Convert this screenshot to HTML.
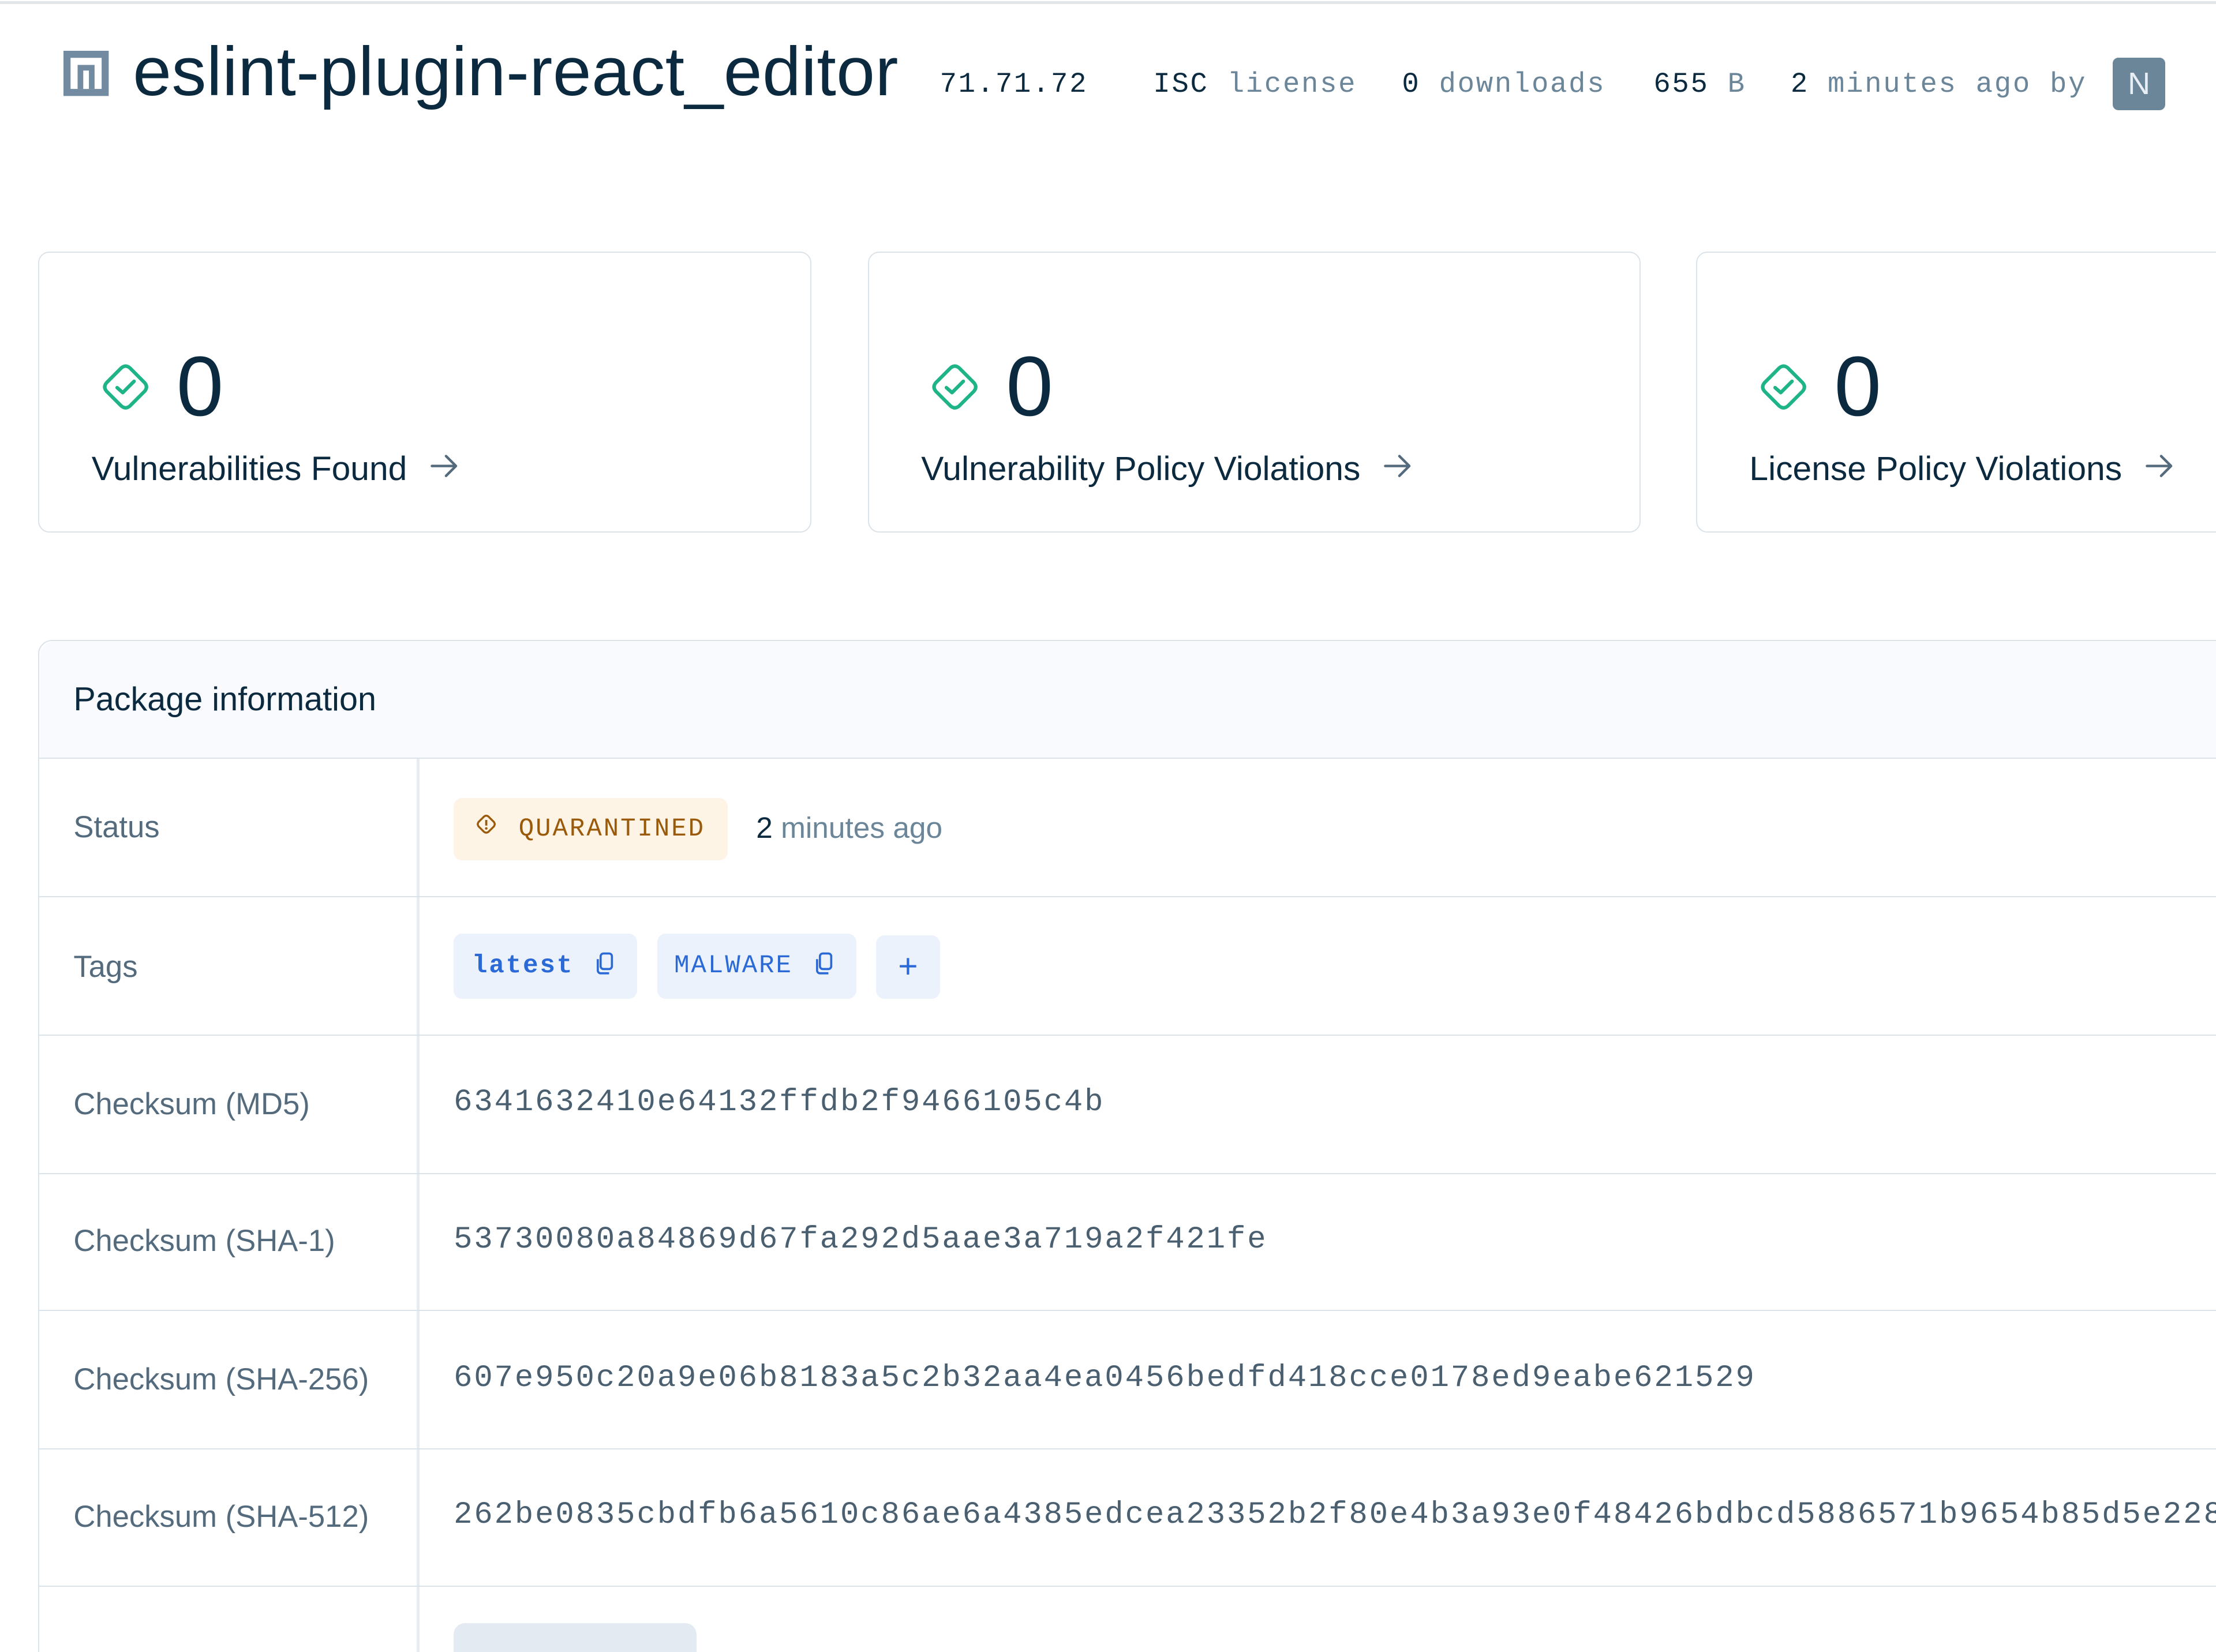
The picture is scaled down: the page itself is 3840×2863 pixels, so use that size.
<!DOCTYPE html>
<html><head><meta charset="utf-8"><style>
html,body{margin:0;padding:0;background:#fff;overflow:hidden}
#w{zoom:2.449;width:1568px;height:1169px;position:relative;overflow:hidden;font-family:"Liberation Sans",sans-serif;color:#0b2a3f}
.a{position:absolute;white-space:nowrap}
.mono{font-family:"Liberation Mono",monospace}
.card{position:absolute;top:178px;width:547px;height:199px;border:1px solid #dbe3ea;border-radius:8px;box-sizing:border-box}
.card .ic{position:absolute;left:44px;top:78px}
.card .n{position:absolute;left:97px;top:62px;font-size:60px;line-height:66px}
.card .l{position:absolute;left:37px;top:138px;font-size:24px;line-height:30px}
.card .ar{display:inline-block;margin-left:10px;vertical-align:2px}
.row{position:absolute;left:27px;width:1560px;border-top:1px solid #dbe3ea}
.lab{position:absolute;left:25px;font-size:21.5px;color:#546a7d}
.val{position:absolute;left:294px;font-size:22px;color:#4a5f70;letter-spacing:1.2px;font-family:"Liberation Mono",monospace}
</style></head><body><div id="w">
<div class="a" style="left:0;top:1px;width:1568px;height:2px;background:#e3e6e9"></div>
<svg class="a" style="left:45px;top:36px" width="32" height="32" viewBox="0 0 32 32"><rect width="32" height="32" fill="#728ba0"/><rect x="5" y="5" width="22" height="22" fill="#fff"/><rect x="10" y="10" width="12" height="17" fill="#728ba0"/><rect x="14" y="14" width="4" height="13" fill="#fff"/></svg>
<div class="a" style="left:94px;top:23px;font-size:49px;line-height:56px;font-weight:500;letter-spacing:0.2px">eslint-plugin-react_editor</div>
<div class="a mono" style="left:665px;top:47px;font-size:20px;line-height:26px;letter-spacing:1.1px;color:#0b2a3f">71.71.72</div>
<div class="a mono" style="left:816px;top:47px;font-size:20px;line-height:26px;letter-spacing:1.1px">ISC <span style="color:#6b8599">license</span></div>
<div class="a mono" style="left:992px;top:47px;font-size:20px;line-height:26px;letter-spacing:1.1px">0 <span style="color:#6b8599">downloads</span></div>
<div class="a mono" style="left:1170px;top:47px;font-size:20px;line-height:26px;letter-spacing:1.1px">655 <span style="color:#6b8599">B</span></div>
<div class="a mono" style="left:1267px;top:47px;font-size:20px;line-height:26px;letter-spacing:1.1px">2 <span style="color:#6b8599">minutes ago by</span></div>
<div class="a" style="left:1495px;top:41px;width:37px;height:37px;border-radius:4px;background:#6b8599;color:#e8eef3;font-size:22px;line-height:37px;text-align:center">N</div>

<div class="card" style="left:27px"><svg class="ic" width="34" height="34" viewBox="0 0 34 34"><path d="M14 3.5 Q17 1 20 3.5 L30.5 14 Q33 17 30.5 20 L20 30.5 Q17 33 14 30.5 L3.5 20 Q1 17 3.5 14 Z" fill="none" stroke="#1fb487" stroke-width="2.5" stroke-linejoin="round"/><path d="M11 17.5 L15 21 L23 13" fill="none" stroke="#1fb487" stroke-width="2.5" stroke-linecap="round" stroke-linejoin="round"/></svg><div class="n">0</div><div class="l">Vulnerabilities Found <svg class="ar" width="20" height="16" viewBox="0 0 20 16"><path d="M1 8h17M11 1l7 7-7 7" fill="none" stroke="#546a7d" stroke-width="1.8" stroke-linecap="round" stroke-linejoin="round"/></svg></div></div>
<div class="card" style="left:614px"><svg class="ic" width="34" height="34" viewBox="0 0 34 34"><path d="M14 3.5 Q17 1 20 3.5 L30.5 14 Q33 17 30.5 20 L20 30.5 Q17 33 14 30.5 L3.5 20 Q1 17 3.5 14 Z" fill="none" stroke="#1fb487" stroke-width="2.5" stroke-linejoin="round"/><path d="M11 17.5 L15 21 L23 13" fill="none" stroke="#1fb487" stroke-width="2.5" stroke-linecap="round" stroke-linejoin="round"/></svg><div class="n">0</div><div class="l">Vulnerability Policy Violations <svg class="ar" width="20" height="16" viewBox="0 0 20 16"><path d="M1 8h17M11 1l7 7-7 7" fill="none" stroke="#546a7d" stroke-width="1.8" stroke-linecap="round" stroke-linejoin="round"/></svg></div></div>
<div class="card" style="left:1200px"><svg class="ic" width="34" height="34" viewBox="0 0 34 34"><path d="M14 3.5 Q17 1 20 3.5 L30.5 14 Q33 17 30.5 20 L20 30.5 Q17 33 14 30.5 L3.5 20 Q1 17 3.5 14 Z" fill="none" stroke="#1fb487" stroke-width="2.5" stroke-linejoin="round"/><path d="M11 17.5 L15 21 L23 13" fill="none" stroke="#1fb487" stroke-width="2.5" stroke-linecap="round" stroke-linejoin="round"/></svg><div class="n">0</div><div class="l">License Policy Violations <svg class="ar" width="20" height="16" viewBox="0 0 20 16"><path d="M1 8h17M11 1l7 7-7 7" fill="none" stroke="#546a7d" stroke-width="1.8" stroke-linecap="round" stroke-linejoin="round"/></svg></div></div>

<div class="a" style="left:27px;top:453px;width:1560px;height:760px;border:1px solid #dbe3ea;border-radius:10px;box-sizing:border-box"></div>
<div class="a" style="left:28px;top:454px;width:1560px;height:83px;background:#f8fafd;border-radius:10px 0 0 0"></div>
<div class="a" style="left:52px;top:480px;font-size:23.5px;line-height:30px;font-weight:500">Package information</div>
<div class="a" style="left:295px;top:537px;width:2px;height:640px;background:#e6ecf2"></div>

<div class="row" style="top:536px;height:98px"><div class="lab" style="top:36px">Status</div>
<div class="a" style="left:294px;top:28px;width:194px;height:44px;background:#fdf4e6;border-radius:6px"></div>
<svg class="a" style="left:309px;top:39px" width="16" height="18" viewBox="0 0 16 18"><path d="M6.5 2 Q8 1 9.5 2 L13.5 6 Q14.5 7.5 13.5 9 L9.5 13 Q8 14 6.5 13 L2.5 9 Q1.5 7.5 2.5 6 Z" fill="none" stroke="#9a5a0a" stroke-width="1.4" stroke-linejoin="round"/><path d="M8 4.5v4" stroke="#9a5a0a" stroke-width="1.5"/><circle cx="8" cy="10.5" r="0.9" fill="#9a5a0a"/></svg>
<div class="a mono" style="left:340px;top:38px;font-size:18px;line-height:24px;letter-spacing:1.2px;color:#9a5a0a">QUARANTINED</div>
<div class="a" style="left:508px;top:36px;font-size:21px;line-height:26px">2 <span style="color:#6b8599">minutes ago</span></div></div>

<div class="row" style="top:634px;height:98px"><div class="lab" style="top:37px">Tags</div>
<div class="a" style="left:294px;top:26px;width:130px;height:46px;background:#ebf2fc;border-radius:6px"></div>
<div class="a mono" style="left:307px;top:37px;font-size:18px;line-height:24px;letter-spacing:1.2px;color:#2b6ad6;font-weight:bold">latest</div>
<svg class="a" style="left:394px;top:39px" width="14" height="18" viewBox="0 0 14 18"><rect x="4" y="1" width="8" height="11" rx="2" fill="none" stroke="#2b6ad6" stroke-width="1.5"/><path d="M2 5v8a2 2 0 0 0 2 2h6" fill="none" stroke="#2b6ad6" stroke-width="1.5"/></svg>
<div class="a" style="left:438px;top:26px;width:141px;height:46px;background:#ebf2fc;border-radius:6px"></div>
<div class="a mono" style="left:450px;top:37px;font-size:18px;line-height:24px;letter-spacing:1.2px;color:#2b6ad6">MALWARE</div>
<svg class="a" style="left:549px;top:39px" width="14" height="18" viewBox="0 0 14 18"><rect x="4" y="1" width="8" height="11" rx="2" fill="none" stroke="#2b6ad6" stroke-width="1.5"/><path d="M2 5v8a2 2 0 0 0 2 2h6" fill="none" stroke="#2b6ad6" stroke-width="1.5"/></svg>
<div class="a" style="left:593px;top:27px;width:45px;height:45px;background:#ebf2fc;border-radius:6px;color:#2b6ad6;font-size:24px;line-height:44px;text-align:center">+</div></div>

<div class="row" style="top:732px;height:98px"><div class="lab" style="top:36px">Checksum (MD5)</div><div class="val" style="top:35px">6341632410e64132ffdb2f9466105c4b</div></div>
<div class="row" style="top:830px;height:97px"><div class="lab" style="top:35px">Checksum (SHA-1)</div><div class="val" style="top:34px">53730080a84869d67fa292d5aae3a719a2f421fe</div></div>
<div class="row" style="top:927px;height:98px"><div class="lab" style="top:36px">Checksum (SHA-256)</div><div class="val" style="top:35px">607e950c20a9e06b8183a5c2b32aa4ea0456bedfd418cce0178ed9eabe621529</div></div>
<div class="row" style="top:1025px;height:97px"><div class="lab" style="top:35px">Checksum (SHA-512)</div><div class="val" style="top:34px">262be0835cbdfb6a5610c86ae6a4385edcea23352b2f80e4b3a93e0f48426bdbcd5886571b9654b85d5e228</div></div>
<div class="row" style="top:1122px;height:60px"><div class="a" style="left:294px;top:26px;width:172px;height:40px;background:#e3eaf2;border-radius:8px 8px 0 0"></div></div>
</div></body></html>
